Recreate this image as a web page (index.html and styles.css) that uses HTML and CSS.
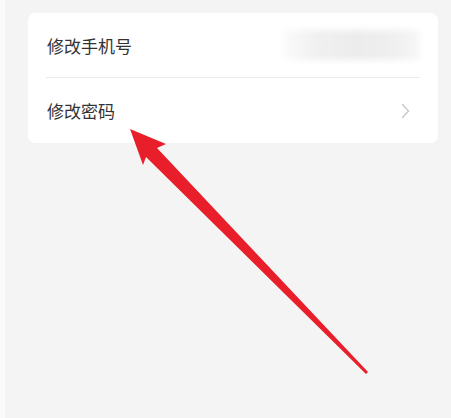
FILE: index.html
```html
<!DOCTYPE html>
<html lang="zh">
<head>
<meta charset="utf-8">
<link rel="stylesheet" href="styles.css">
</head>
<body>
<div class="page">
  <div class="card">
    <div class="row row-first">
      <span class="label">修改手机号</span>
      <span class="masked"></span>
    </div>
    <div class="divider"></div>
    <div class="row row-second">
      <span class="label">修改密码</span>
      <svg class="chevron" width="9" height="16" viewBox="0 0 9 16"><path d="M1.5 1.5 L7.5 8 L1.5 14.5" fill="none" stroke="#c9c9c9" stroke-width="1.4" stroke-linecap="round" stroke-linejoin="round"/></svg>
    </div>
  </div>
  <svg class="arrow" width="451" height="418" viewBox="0 0 451 418">
    <polygon points="130,129 166,144 157,148 368,372 366,374 146,157 143,165" fill="#e81f2a"/>
  </svg>
</div>
</body>
</html>
```
FILE: styles.css
```css
html, body {
  margin: 0;
  padding: 0;
  background: #f4f4f4;
}
.page {
  position: relative;
  width: 451px;
  height: 418px;
  box-sizing: border-box;
  border-left: 5px solid #fafafa;
  padding: 13px 13px 0 23px;
  font-family: "Noto Sans CJK SC", "Noto Sans", sans-serif;
}
.card {
  width: 410px;
  background: #ffffff;
  border-radius: 7px;
  display: flex;
  flex-direction: column;
}
.row {
  display: flex;
  align-items: center;
  justify-content: space-between;
  padding: 0 18px 0 19px;
}
.row-first { height: 64px; }
.row-second { height: 65px; padding-right: 28px; }
.label {
  font-size: 17px;
  color: #333333;
  line-height: 1;
}
.masked {
  width: 137px;
  height: 30px;
  background: linear-gradient(90deg, #fbfbfb 0%, #f0f0f0 25%, #ececec 55%, #efefef 80%, #f7f7f7 100%);
  filter: blur(3px);
  border-radius: 4px;
}
.divider {
  height: 1px;
  background: #ebebeb;
  margin: 0 18px;
}
.chevron {
  display: block;
}
.arrow {
  position: absolute;
  left: -5px;
  top: 0;
  pointer-events: none;
}
```
